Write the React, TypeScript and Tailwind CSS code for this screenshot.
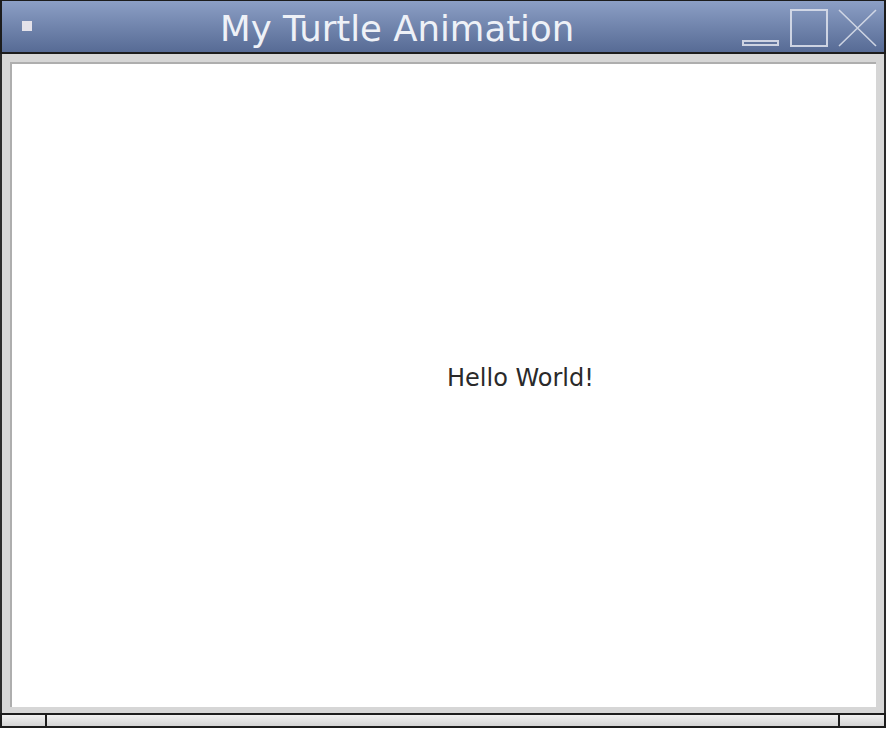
import React from 'react';

const TitleButtons: React.FC = () => (
  <div className="flex items-start gap-0">
    {/* minimize */}
    <div className="mt-[39px] w-[37px] h-[6px] border-2 border-[#d9deea] opacity-90" />
    {/* maximize */}
    <div className="ml-[11px] mt-[8px] w-[38px] h-[38px] border-2 border-[#d9deea] opacity-90" />
    {/* close */}
    <svg className="ml-[10px] mt-[8px]" width="39" height="38" viewBox="0 0 39 38">
      <path d="M1 1 L38 37 M38 1 L1 37" stroke="#d9deea" strokeWidth="1.6" opacity="0.9" />
    </svg>
  </div>
);

const App: React.FC = () => {
  return (
    <div
      className="w-[886px] h-[729px] flex flex-col bg-white overflow-hidden"
      style={{ fontFamily: '"DejaVu Sans", Verdana, sans-serif' }}
    >
      {/* title bar */}
      <div className="h-[54px] flex items-start border-t border-l-2 border-r-2 border-[#1c1c1c] border-b-2 bg-gradient-to-b from-[#8c9fc5] to-[#576b95]">
        <div className="ml-[20px] mt-[20px] w-[10px] h-[10px] bg-[#e4e2ea]" />
        <div className="ml-[188px] mt-[10px] text-[35.5px] leading-none text-[#eef1f7] whitespace-nowrap">
          My Turtle Animation
        </div>
        <div className="flex-1" />
        <div className="mr-[7px]">
          <TitleButtons />
        </div>
      </div>

      {/* frame */}
      <div className="flex-1 flex border-l-2 border-r-2 border-[#2a2a2a] bg-[#d6d6d6] px-[8px] pt-[8px] pb-[6px]">
        <div className="flex-1 bg-white border-t-2 border-l-2 border-[#aeaeae] pl-[435px] pt-[302px]">
          <div className="text-[24px] leading-none text-[#2a2a2a]">Hello World!</div>
        </div>
      </div>

      {/* bottom handle strip */}
      <div className="h-[15px] flex border-2 border-[#1c1c1c] bg-[#e2e2e2]">
        <div className="w-[45px] border-r-2 border-[#1c1c1c] bg-gradient-to-b from-[#f0f0f0] to-[#d4d4d4]" />
        <div className="flex-1 border-r-2 border-[#1c1c1c] bg-gradient-to-b from-[#f0f0f0] to-[#d4d4d4]" />
        <div className="w-[44px] bg-gradient-to-b from-[#f0f0f0] to-[#d4d4d4]" />
      </div>
      <div className="h-[1px] bg-white" />
    </div>
  );
};

export default App;
